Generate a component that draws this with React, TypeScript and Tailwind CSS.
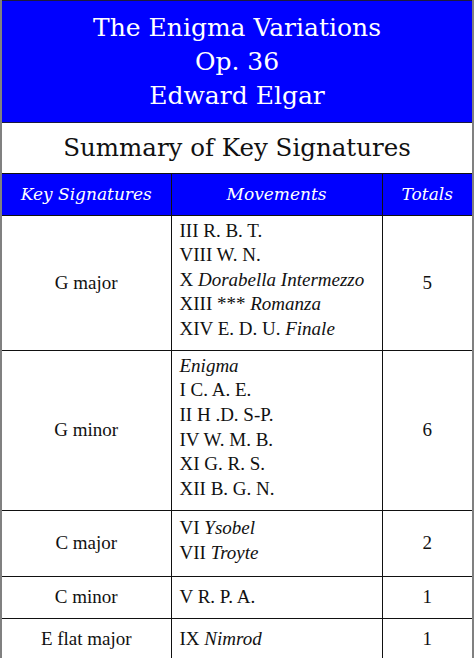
const serif = "font-['DejaVu_Serif',Georgia,serif]";
const times = "font-['Liberation_Serif',serif]";

type Row = {
  key: string;
  moves: React.ReactNode[];
  total: string;
  h: string;
};

const rows: Row[] = [
  {
    key: 'G major',
    moves: [
      'III R. B. T.',
      'VIII W. N.',
      <>X <i>Dorabella Intermezzo</i></>,
      <>XIII *** <i>Romanza</i></>,
      <>XIV E. D. U. <i>Finale</i></>,
    ],
    total: '5',
    h: 'h-[135px]',
  },
  {
    key: 'G minor',
    moves: [
      <i>Enigma</i>,
      'I C. A. E.',
      'II H .D. S-P.',
      'IV W. M. B.',
      'XI G. R. S.',
      'XII B. G. N.',
    ],
    total: '6',
    h: 'h-[160px]',
  },
  {
    key: 'C major',
    moves: [<>VI <i>Ysobel</i></>, <>VII <i>Troyte</i></>],
    total: '2',
    h: 'h-[66px]',
  },
  { key: 'C minor', moves: ['V R. P. A.'], total: '1', h: 'h-[42px]' },
  { key: 'E flat major', moves: [<>IX <i>Nimrod</i></>], total: '1', h: 'h-[42px]' },
];

export default function App() {
  return (
    <div className="w-[474px] h-[658px] overflow-hidden bg-white border-x-2 border-[#808080]">
      <div className="h-[123px] bg-[#0000ff] border-t border-b border-[#1a1a40] flex flex-col items-center justify-center text-white">
        <div className={`${serif} text-[25px] leading-[34px]`}>The Enigma Variations</div>
        <div className={`${serif} text-[25px] leading-[34px]`}>Op. 36</div>
        <div className={`${serif} text-[25px] leading-[34px]`}>Edward Elgar</div>
      </div>
      <div className="h-[50px] flex items-center justify-center">
        <div className={`${serif} text-[24.5px] text-[#111]`}>Summary of Key Signatures</div>
      </div>
      <table className="w-full border-collapse table-fixed">
        <colgroup>
          <col className="w-[169px]" />
          <col className="w-[211px]" />
          <col />
        </colgroup>
        <thead>
          <tr className="h-[42px] bg-[#0000ff] text-white">
            <th className={`${serif} italic font-normal text-[17px] border border-[#111] border-l-0`}>Key Signatures</th>
            <th className={`${serif} italic font-normal text-[17px] border border-[#111]`}>Movements</th>
            <th className={`${serif} italic font-normal text-[17px] border border-[#111] border-r-0`}>Totals</th>
          </tr>
        </thead>
        <tbody className="text-[#111]">
          {rows.map((r) => (
            <tr key={r.key} className={r.h}>
              <td className={`${times} text-[19px] text-center border border-[#111] border-l-0`}>{r.key}</td>
              <td
                className={`${times} text-[19px] leading-[24.6px] px-2 border border-[#111] ${
                  r.moves.length > 1 ? 'pb-[6px]' : 'pb-0'
                }`}
              >
                {r.moves.map((m, i) => (
                  <div key={i}>{m}</div>
                ))}
              </td>
              <td className={`${times} text-[19px] text-center border border-[#111] border-r-0`}>{r.total}</td>
            </tr>
          ))}
        </tbody>
      </table>
    </div>
  );
}
